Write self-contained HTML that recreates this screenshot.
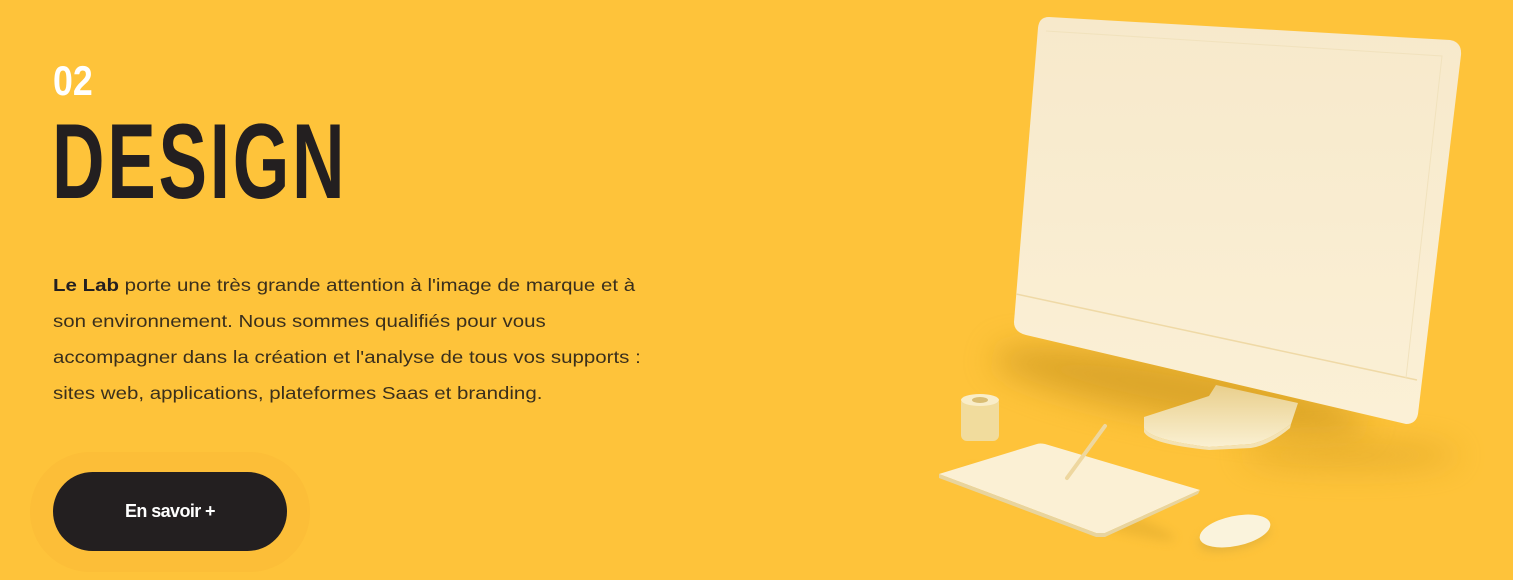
<!DOCTYPE html>
<html><head><meta charset="utf-8"><style>
html,body{margin:0;padding:0}
body{width:1513px;height:580px;background:#fec33a;position:relative;overflow:hidden;font-family:"Liberation Sans",sans-serif}
.num{position:absolute;left:53px;top:58px;font-weight:bold;font-size:42px;line-height:46px;color:#fff;transform:scaleX(0.85);transform-origin:left top}
.title{position:absolute;left:52px;top:108px;font-weight:bold;font-size:107px;line-height:107px;color:#231f20;transform:scaleX(0.68);transform-origin:left top;letter-spacing:4px}
.txt{position:absolute;left:53px;top:267px;font-size:17.5px;line-height:36px;color:#3a2f1c;white-space:nowrap;transform:scaleX(1.17);transform-origin:left top}
.txt b{color:#231f20}
.halo{position:absolute;left:30px;top:452px;width:280px;height:120px;border-radius:60px;background:#fcbe38}
.btn{position:absolute;left:53px;top:472px;width:234px;height:79px;border-radius:40px;background:#231f20;color:#fff;font-weight:bold;font-size:18px;letter-spacing:-0.6px;text-align:center;line-height:79px}
</style></head><body>
<div class="num">02</div>
<div class="title">DESIGN</div>
<div class="txt"><b>Le Lab</b> porte une très grande attention à l'image de marque et à<br>son environnement. Nous sommes qualifiés pour vous<br>accompagner dans la création et l'analyse de tous vos supports :<br>sites web, applications, plateformes Saas et branding.</div>
<div class="halo"></div>
<div class="btn">En savoir +</div>
<svg style="position:absolute;left:0;top:0" width="1513" height="580">
<defs>
<filter id="b" x="-100%" y="-300%" width="300%" height="700%"><feGaussianBlur stdDeviation="16"/></filter>
<filter id="b2" x="-100%" y="-300%" width="300%" height="700%"><feGaussianBlur stdDeviation="5"/></filter>
<linearGradient id="scr" x1="0" y1="0" x2="0" y2="1"><stop offset="0" stop-color="#f7e9cb"/><stop offset="1" stop-color="#fbf0d6"/></linearGradient>
<linearGradient id="st" x1="0" y1="0" x2="0" y2="1"><stop offset="0" stop-color="#e9cf8c"/><stop offset="1" stop-color="#faf0d2"/></linearGradient>
</defs>
<ellipse cx="1180" cy="390" rx="190" ry="28" fill="#c08d1c" opacity="0.55" filter="url(#b)" transform="rotate(10 1180 390)"/>
<ellipse cx="1350" cy="455" rx="110" ry="14" fill="#c8941f" opacity="0.4" filter="url(#b)"/>
<path d="M1209,396 L1216,385 L1298,403 L1291,424 Q1270,440 1251,444 L1209,447 Q1150,440 1144,428 L1144,417 Z" fill="url(#st)"/>
<path d="M1144,428 Q1150,440 1209,447 L1251,444 Q1270,440 1291,424 L1290,428 Q1270,445 1251,448 L1209,450 Q1150,444 1144,432 Z" fill="#f3e2b4"/>
<path d="M1049,17 L1450,40 Q1462,42 1461,55 L1418,414 Q1416,424 1406,424 L1026,335 Q1014,332 1014,322 L1038,28 Q1039,17 1049,17 Z" fill="url(#scr)"/>
<path d="M1016,294 L1417,380" stroke="#efd9a6" stroke-width="1.5"/>
<path d="M1046,31 L1442,56 L1406,378" stroke="#f1e2bd" stroke-width="1" fill="none"/>
<ellipse cx="1070" cy="505" rx="110" ry="12" fill="#d9a52a" opacity="0.4" filter="url(#b2)" transform="rotate(18 1070 505)"/>
<path d="M939,474 L1037,444 Q1040,443 1045,444 L1200,490 L1105,533 Q1101,535 1096,533 Z" fill="#fbf0d4"/>
<path d="M939,474 L1096,533 L1105,533 L1200,490 L1198,494 L1105,537 L1096,537 L939,478 Z" fill="#e8d49e"/>
<path d="M1105,426 L1067,478" stroke="#eed79f" stroke-width="4" stroke-linecap="round"/>
<rect x="961" y="397" width="38" height="44" rx="6" fill="#f1dc9d"/>
<ellipse cx="980" cy="400" rx="19" ry="6" fill="#f9edc8"/>
<ellipse cx="980" cy="400" rx="8" ry="3" fill="#d9bd74"/>
<ellipse cx="1234" cy="537" rx="36" ry="12" fill="#c9a13a" opacity="0.5" transform="rotate(-12 1234 537)" filter="url(#b2)"/>
<ellipse cx="1235" cy="531" rx="36" ry="15" fill="#faf3dc" transform="rotate(-12 1235 531)"/>
</svg>
</body></html>
